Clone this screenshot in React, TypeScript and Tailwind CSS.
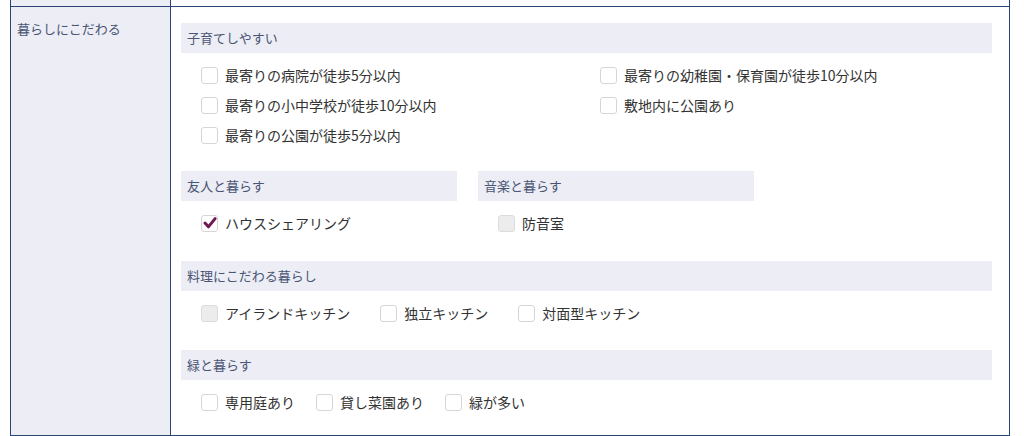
import React from 'react'

type Item = { label: string; checked?: boolean; disabled?: boolean }

function Box({ checked, disabled }: { checked?: boolean; disabled?: boolean }) {
    return (
        <span
            className={`w-[17px] h-[17px] shrink-0 rounded-[3px] border flex items-center justify-center ${
                disabled ? 'bg-[#ececec] border-[#dcdcdc]' : 'bg-white border-[#d6d6d6]'
            }`}
        >
            {checked && (
                <svg viewBox="0 0 16 16" className="w-[14px] h-[14px]">
                    <path d="M2.3 8 L6.2 12.4 L13.8 3" fill="none" stroke="#6e1a52" strokeWidth="3.4" strokeLinecap="round" strokeLinejoin="round" />
                </svg>
            )}
        </span>
    )
}

function Check({ item, className = '' }: { item: Item; className?: string }) {
    return (
        <label className={`flex items-center h-[30px] gap-[7px] text-[14px] text-[#333] ${className}`}>
            <Box checked={item.checked} disabled={item.disabled} />
            <span>{item.label}</span>
        </label>
    )
}

function Heading({ title }: { title: string }) {
    return (
        <div className="h-[30px] bg-[#ecedf5] flex items-center px-[6px] text-[13px] text-[#4a5573]">
            {title}
        </div>
    )
}

export default function App() {
    return (
        <div className="w-[1024px] h-[436px] bg-white" style={{ fontFamily: '"Noto Sans CJK JP", "Noto Sans", sans-serif' }}>
            <div className="ml-[10px] w-[1000px] border-l border-r border-b border-[#2b4478]">
                {/* row above, cut off */}
                <div className="grid grid-cols-[160px_1fr] h-[7px] border-b border-[#2b4478]">
                    <div className="bg-[#ecedf5] border-r border-[#2b4478]" />
                    <div />
                </div>

                <div className="grid grid-cols-[160px_1fr] h-[428px]">
                    <div className="bg-[#ecedf5] border-r border-[#2b4478] pl-[6px] pt-[12px] text-[13px] text-[#4a5573]">
                        暮らしにこだわる
                    </div>

                    <div className="pl-[10px] pr-[17px] pt-[16px]">
                        {/* 子育てしやすい */}
                        <Heading title="子育てしやすい" />
                        <div className="grid grid-cols-[399px_1fr] pl-[20px] mt-[7px]">
                            <Check item={{ label: '最寄りの病院が徒歩5分以内' }} />
                            <Check item={{ label: '最寄りの幼稚園・保育園が徒歩10分以内' }} />
                            <Check item={{ label: '最寄りの小中学校が徒歩10分以内' }} />
                            <Check item={{ label: '敷地内に公園あり' }} />
                            <Check item={{ label: '最寄りの公園が徒歩5分以内' }} />
                        </div>

                        {/* 友人 / 音楽 */}
                        <div className="flex gap-[21px] mt-[21px]">
                            <div className="w-[276px]">
                                <Heading title="友人と暮らす" />
                                <div className="pl-[20px] mt-[7px]">
                                    <Check item={{ label: 'ハウスシェアリング', checked: true }} />
                                </div>
                            </div>
                            <div className="w-[276px]">
                                <Heading title="音楽と暮らす" />
                                <div className="pl-[20px] mt-[7px]">
                                    <Check item={{ label: '防音室', disabled: true }} />
                                </div>
                            </div>
                        </div>

                        {/* 料理 */}
                        <div className="mt-[23px]">
                            <Heading title="料理にこだわる暮らし" />
                            <div className="flex gap-[30px] pl-[20px] mt-[7px]">
                                <Check item={{ label: 'アイランドキッチン', disabled: true }} />
                                <Check item={{ label: '独立キッチン' }} />
                                <Check item={{ label: '対面型キッチン' }} />
                            </div>
                        </div>

                        {/* 緑 */}
                        <div className="mt-[22px]">
                            <Heading title="緑と暮らす" />
                            <div className="flex gap-[21px] pl-[20px] mt-[7px]">
                                <Check item={{ label: '専用庭あり' }} />
                                <Check item={{ label: '貸し菜園あり' }} />
                                <Check item={{ label: '緑が多い' }} />
                            </div>
                        </div>
                    </div>
                </div>
            </div>
        </div>
    )
}
